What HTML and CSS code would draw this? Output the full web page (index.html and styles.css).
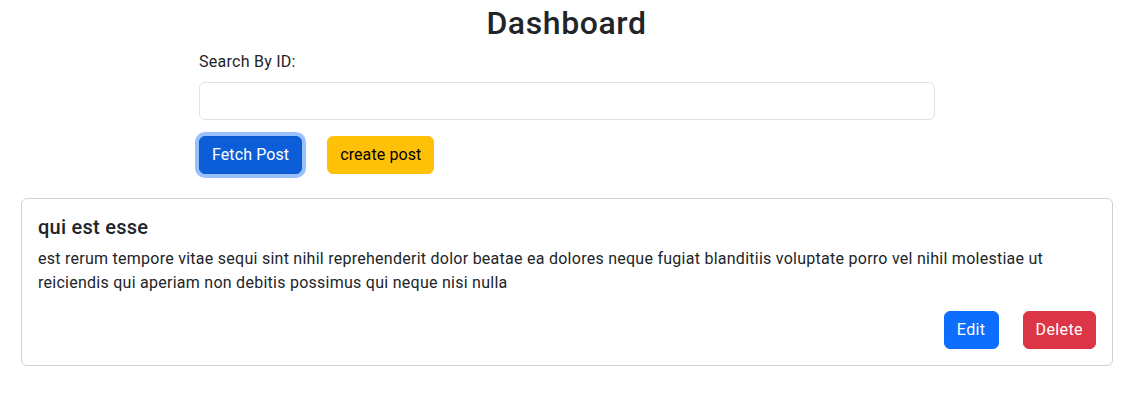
FILE: index.html
```html
<!DOCTYPE html>
<html lang="en">
<head>
<meta charset="utf-8">
<title>Dashboard</title>
<link rel="stylesheet" href="styles.css">
</head>
<body>
<main class="page">
  <h2 class="title">Dashboard</h2>
  <section class="search">
    <label class="form-label" for="post-id">Search By ID:</label>
    <input class="form-control" id="post-id" type="text">
    <div class="actions">
      <button class="btn btn-primary is-focused" type="button">Fetch Post</button>
      <button class="btn btn-warning" type="button">create post</button>
    </div>
  </section>
  <article class="card">
    <h5 class="card-title">qui est esse</h5>
    <p class="card-text">est rerum tempore vitae sequi sint nihil reprehenderit dolor beatae ea dolores neque fugiat blanditiis voluptate porro vel nihil molestiae ut reiciendis qui aperiam non debitis possimus qui neque nisi nulla</p>
    <div class="card-actions">
      <button class="btn btn-blue" type="button">Edit</button>
      <button class="btn btn-danger" type="button">Delete</button>
    </div>
  </article>
</main>
</body>
</html>
```
FILE: styles.css
```css
* { box-sizing: border-box; }
html, body { margin: 0; padding: 0; background: #fff; }
body {
  font-family: Roboto, "Noto Sans", sans-serif;
  font-size: 16px;
  line-height: 24px;
  letter-spacing: 0.26px;
  color: #212529;
}
.page {
  display: flex;
  flex-direction: column;
  padding: 4px 18px 0 21px;
}
.title {
  margin: 0;
  font-size: 32px;
  line-height: 38px;
  font-weight: 500;
  letter-spacing: 0.6px;
  text-align: center;
}
.search {
  width: 736px;
  margin: 8px 0 0 178px;
  display: flex;
  flex-direction: column;
}
.form-label {
  display: block;
  margin-bottom: 8px;
}
.form-control {
  display: block;
  width: 100%;
  height: 38px;
  padding: 6px 12px;
  font: inherit;
  border: 1px solid #dee2e6;
  border-radius: 6px;
  background: #fff;
  outline: none;
}
.actions {
  display: flex;
  gap: 25px;
  margin-top: 16px;
}
.btn {
  display: inline-block;
  height: 38px;
  padding: 6px 12px;
  font: inherit;
  letter-spacing: 0.1px;
  line-height: 24px;
  border: 1px solid transparent;
  border-radius: 6px;
  cursor: pointer;
}
.card-actions .btn { letter-spacing: 0.4px; }
.btn-primary { background: #0b5ed7; border-color: #0a58ca; color: #fff; }
.is-focused { box-shadow: 0 0 0 4px rgba(49, 132, 253, 0.5); }
.btn-warning { background: #ffc107; border-color: #ffc107; color: #000; }
.btn-blue { background: #0d6efd; border-color: #0d6efd; color: #fff; }
.btn-danger { background: #dc3545; border-color: #dc3545; color: #fff; }
.card {
  margin-top: 24px;
  width: 1092px;
  padding: 16px;
  border: 1px solid rgba(0, 0, 0, 0.175);
  border-radius: 6px;
  display: flex;
  flex-direction: column;
}
.card-title {
  margin: 0 0 8px;
  font-size: 20px;
  line-height: 24px;
  font-weight: 500;
}
.card-text { margin: 0 0 16px; }
.card-actions {
  display: flex;
  justify-content: flex-end;
  gap: 24px;
}
```
